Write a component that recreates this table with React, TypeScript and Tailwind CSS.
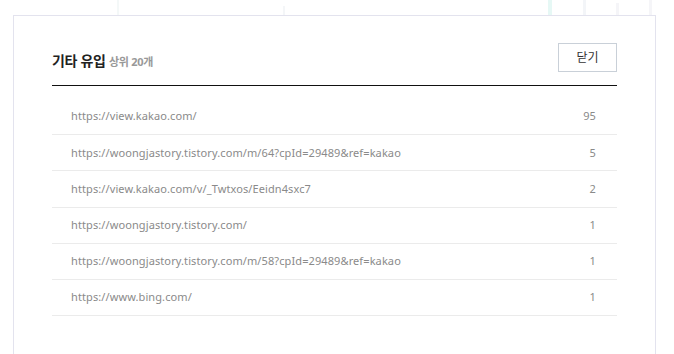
import React from 'react'

const rows = [
  { url: 'https://view.kakao.com/', count: 95 },
  { url: 'https://woongjastory.tistory.com/m/64?cpId=29489&ref=kakao', count: 5 },
  { url: 'https://view.kakao.com/v/_Twtxos/Eeidn4sxc7', count: 2 },
  { url: 'https://woongjastory.tistory.com/', count: 1 },
  { url: 'https://woongjastory.tistory.com/m/58?cpId=29489&ref=kakao', count: 1 },
  { url: 'https://www.bing.com/', count: 1 },
]

const App = () => {
  return (
    <div
      className="w-[674px] h-[354px] bg-white overflow-hidden"
      style={{ fontFamily: '"Noto Sans", "Noto Sans CJK KR", sans-serif' }}
    >
      {/* faded chart bars behind the layer */}
      <div className="flex items-end h-[15px] pl-[117px]">
        <div className="w-[2px] h-[15px] bg-[#f4f8f8]" />
        <div className="w-[2px] h-[9px] bg-[#f4f6f8] ml-[164px]" />
        <div className="w-[4px] h-[15px] bg-[#e6f8f5] ml-[263px]" />
        <div className="w-[3px] h-[15px] bg-[#f3f5f8] ml-[31px]" />
        <div className="w-[3px] h-[12px] bg-[#f5f5f8] ml-[30px]" />
        <div className="w-[3px] h-[15px] bg-[#f5f5f8] ml-[30px]" />
      </div>

      <div className="pl-[13px]">
        <div className="w-[643px] h-[360px] border border-[#e3e3ee] bg-white px-[38px] pt-[27px]">
          <div className="flex items-end justify-between pb-[13px] border-b border-[#111]">
            <h2 className="text-[14px] font-bold text-[#222] leading-none mb-[4px] tracking-[-0.3px]">
              기타 유입{' '}
              <span className="text-[11px] font-bold text-[#999] tracking-[-0.3px]">상위 20개</span>
            </h2>
            <button className="w-[59px] h-[29px] border border-[#c9d0d8] text-[12px] text-[#333] bg-white">
              닫기
            </button>
          </div>
          <ul className="pt-[13px]">
            {rows.map((r, i) => (
              <li
                key={i}
                className="flex justify-between items-center h-[36.2px] pl-[19px] pr-[21px] border-b border-[#ebebeb] text-[11px] tracking-[0.1px] text-[#8a8a8a]"
              >
                <span>{r.url}</span>
                <span>{r.count}</span>
              </li>
            ))}
          </ul>
        </div>
      </div>
    </div>
  )
}

export default App
